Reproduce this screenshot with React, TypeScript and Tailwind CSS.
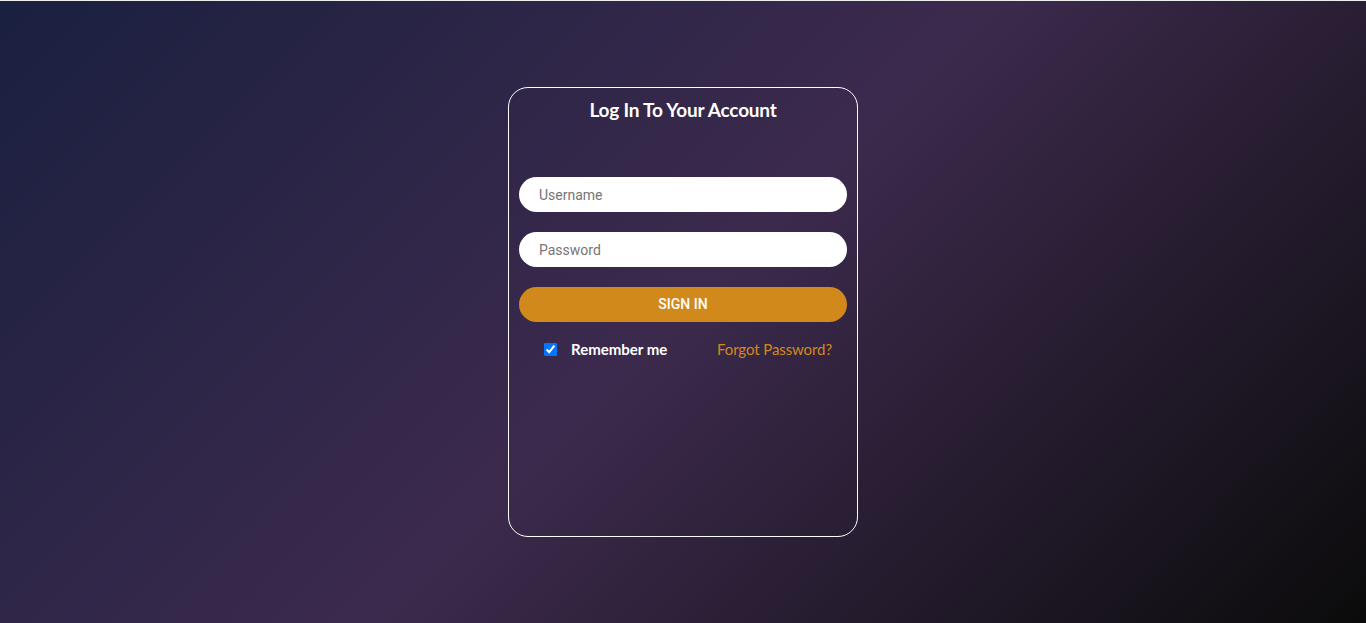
import React from "react";

export default function App() {
  return (
    <div
      className="w-[1366px] h-[623px] overflow-hidden border-t border-[#eeeeee] bg-[linear-gradient(135deg,#1a2040_0%,#3c2a4d_50%,#0b0b0b_100%)] flex justify-center"
      style={{ fontFamily: "Lato, 'Open Sans', sans-serif" }}
    >
      <div className="mt-[86px] w-[350px] h-[450px] rounded-[20px] border border-white px-[10px] flex flex-col">
        <h1 className="text-center text-white text-[19px] font-bold tracking-[-0.2px] leading-none mt-[12px]">
          Log In To Your Account
        </h1>
        <div className="mt-[58px] flex flex-col gap-[20px]">
          <input
            type="text"
            placeholder="Username"
            className="h-[35px] w-full rounded-full bg-white px-[20px] text-[14px] text-[#333] placeholder:text-[#757575] outline-none"
            style={{ fontFamily: "Roboto, sans-serif" }}
          />
          <input
            type="password"
            placeholder="Password"
            className="h-[35px] w-full rounded-full bg-white px-[20px] text-[14px] text-[#333] placeholder:text-[#757575] outline-none"
            style={{ fontFamily: "Roboto, sans-serif" }}
          />
          <button
            className="h-[35px] w-full rounded-full bg-[#d2891c] text-white text-[14px] font-medium"
            style={{ fontFamily: "Roboto, sans-serif" }}
          >
            SIGN IN
          </button>
        </div>
        <div className="mt-[16px] flex items-center justify-between pl-[25px] pr-[15px]">
          <label className="flex items-center gap-[14px] text-white text-[15px] font-bold tracking-[0px]">
            <input type="checkbox" defaultChecked className="w-[13px] h-[13px] accent-[#0075ff]" />
            Remember me
          </label>
          <a className="text-[#d2891c] text-[15px] tracking-[-0.1px]">Forgot Password?</a>
        </div>
      </div>
    </div>
  );
}
